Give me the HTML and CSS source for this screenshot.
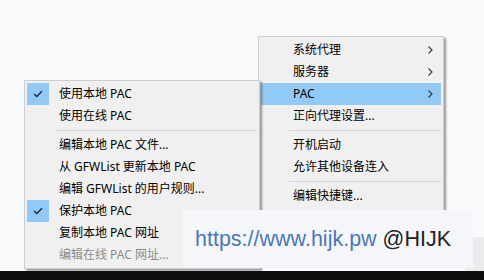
FILE: index.html
```html
<!DOCTYPE html>
<html lang="zh-CN">
<head>
  <meta charset="UTF-8">
  <title>PAC 菜单</title>
  <link rel="stylesheet" href="styles.css">
</head>
<body>
  <div class="desk">
    <div class="corner"></div>

    <div class="menu menu-main">
      <div class="item"><span class="icon"></span><span class="label">系统代理</span><svg class="arrow" width="5" height="8" viewBox="0 0 5 8"><polyline points="0.5,0.5 4,4 0.5,7.5"/></svg></div>
      <div class="item"><span class="icon"></span><span class="label">服务器</span><svg class="arrow" width="5" height="8" viewBox="0 0 5 8"><polyline points="0.5,0.5 4,4 0.5,7.5"/></svg></div>
      <div class="item active"><span class="icon"></span><span class="label">PAC</span><svg class="arrow" width="5" height="8" viewBox="0 0 5 8"><polyline points="0.5,0.5 4,4 0.5,7.5"/></svg></div>
      <div class="item"><span class="icon"></span><span class="label">正向代理设置...</span></div>
      <div class="sep"></div>
      <div class="item"><span class="icon"></span><span class="label">开机启动</span></div>
      <div class="item"><span class="icon"></span><span class="label">允许其他设备连入</span></div>
      <div class="sep"></div>
      <div class="item"><span class="icon"></span><span class="label">编辑快捷键...</span></div>
      <div class="item"><span class="icon"></span><span class="label">&nbsp;</span></div>
    </div>

    <div class="menu menu-sub">
      <div class="item"><span class="icon checked"><svg width="10" height="8" viewBox="0 0 10 8"><polyline points="1,4 3.8,6.6 9,1.2"/></svg></span><span class="label">使用本地 PAC</span></div>
      <div class="item"><span class="icon"></span><span class="label">使用在线 PAC</span></div>
      <div class="sep"></div>
      <div class="item"><span class="icon"></span><span class="label">编辑本地 PAC 文件...</span></div>
      <div class="item"><span class="icon"></span><span class="label">从 GFWList 更新本地 PAC</span></div>
      <div class="item"><span class="icon"></span><span class="label">编辑 GFWList 的用户规则...</span></div>
      <div class="item"><span class="icon checked"><svg width="10" height="8" viewBox="0 0 10 8"><polyline points="1,4 3.8,6.6 9,1.2"/></svg></span><span class="label">保护本地 PAC</span></div>
      <div class="item"><span class="icon"></span><span class="label">复制本地 PAC 网址</span></div>
      <div class="item disabled"><span class="icon"></span><span class="label">编辑在线 PAC 网址...</span></div>
    </div>

    <div class="mark"><span class="url">https://www.hijk.pw</span>&nbsp;@HIJK</div>

    <div class="taskbar"></div>
  </div>
</body>
</html>
```

FILE: styles.css
```css
body {
  margin: 0;
  background: #f8f9fb;
  font-family: "Noto Sans", "Noto Sans CJK SC", sans-serif;
}
.desk {
  position: relative;
  width: 484px;
  height: 280px;
  overflow: hidden;
  background: #f8f9fb;
}
.menu {
  position: absolute;
  box-sizing: border-box;
  background: #f0f0f0;
  border: 1px solid #cdcdcd;
  padding: 2px;
  box-shadow: 2px 2px 2px rgba(0, 0, 0, 0.38);
  font-size: 12px;
  color: #000;
}
.menu-main {
  left: 258px;
  top: 36px;
  width: 186px;
}
.menu-sub {
  left: 24px;
  top: 80px;
  width: 236px;
}
.item {
  display: flex;
  align-items: center;
  height: 22px;
}
.item.active {
  background: #91c9f7;
}
.item.disabled {
  color: #8c8c8c;
}
.icon {
  width: 22px;
  height: 22px;
  margin-right: 10px;
  display: flex;
  align-items: center;
  justify-content: center;
  flex: none;
}
.icon.checked {
  background: #91c9f7;
}
.icon svg polyline {
  fill: none;
  stroke: #1d2c3c;
  stroke-width: 1.4;
}
.label {
  white-space: nowrap;
  line-height: 22px;
}
.arrow {
  margin-left: auto;
  margin-right: 8px;
}
.arrow polyline {
  fill: none;
  stroke: #333;
  stroke-width: 1.1;
}
.sep {
  height: 7px;
  display: flex;
  align-items: center;
  padding-left: 28px;
}
.sep::after {
  content: "";
  flex: 1;
  height: 1px;
  background: #d4d4d4;
}
.corner {
  position: absolute;
  left: 465px;
  top: 237px;
  width: 19px;
  height: 34px;
  background: #ebebeb;
}
.mark {
  position: absolute;
  left: 183px;
  top: 210px;
  width: 290px;
  height: 58px;
  box-sizing: border-box;
  padding-left: 12px;
  display: flex;
  align-items: center;
  background: #f4f6f9;
  font-family: "Liberation Sans", Arial, sans-serif;
  font-size: 21.5px;
  color: #222;
  white-space: nowrap;
}
.url {
  color: #4a78b4;
}
.taskbar {
  position: absolute;
  left: 0;
  top: 271px;
  width: 484px;
  height: 9px;
  background: #0e0e0e;
}
```
